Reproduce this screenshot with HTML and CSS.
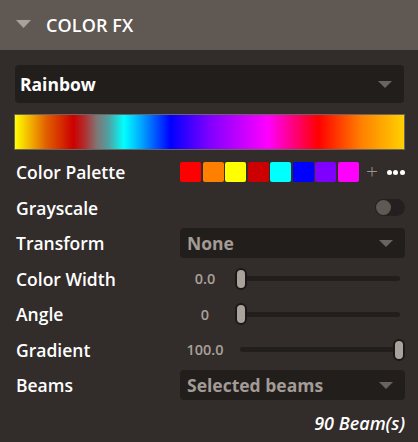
FILE: index.html
```html
<!DOCTYPE html>
<html lang="en">
<head>
    <meta charset="UTF-8">
    <title>Color FX</title>
    <link rel="stylesheet" href="styles.css">
</head>
<body>
    <div class="panel">
        <div class="panel-header">
            <svg class="caret" width="15" height="8" viewBox="0 0 15 8"><polygon points="0,0 15,0 7.5,8"/></svg>
            <span class="panel-title">COLOR FX</span>
        </div>
        <div class="panel-body">
            <div class="select select-big">
                <span>Rainbow</span>
                <svg class="arrow" width="14" height="7" viewBox="0 0 14 7"><polygon points="0,0 14,0 7,7"/></svg>
            </div>
            <div class="rainbow-bar"></div>

            <div class="rows">
                <div class="row">
                    <span class="label">Color Palette</span>
                    <div class="control palette">
                        <span class="swatch" style="background:#ff0000"></span>
                        <span class="swatch" style="background:#ff8000"></span>
                        <span class="swatch" style="background:#ffff00"></span>
                        <span class="swatch" style="background:#cc0000"></span>
                        <span class="swatch" style="background:#00ffff"></span>
                        <span class="swatch" style="background:#0000ff"></span>
                        <span class="swatch" style="background:#8000ff"></span>
                        <span class="swatch" style="background:#ff00ff"></span>
                        <span class="plus">+</span>
                        <span class="dots"><i></i><i></i><i></i></span>
                    </div>
                </div>
                <div class="row">
                    <span class="label">Grayscale</span>
                    <div class="control end">
                        <span class="toggle"><span class="knob"></span></span>
                    </div>
                </div>
                <div class="row">
                    <span class="label">Transform</span>
                    <div class="control select">
                        <span>None</span>
                        <svg class="arrow" width="14" height="7" viewBox="0 0 14 7"><polygon points="0,0 14,0 7,7"/></svg>
                    </div>
                </div>
                <div class="row">
                    <span class="label">Color Width</span>
                    <div class="control slider">
                        <span class="value">0.0</span>
                        <div class="track-wrap"><div class="track"></div><span class="thumb" style="left:0%"></span></div>
                    </div>
                </div>
                <div class="row">
                    <span class="label">Angle</span>
                    <div class="control slider">
                        <span class="value">0</span>
                        <div class="track-wrap"><div class="track"></div><span class="thumb" style="left:0%"></span></div>
                    </div>
                </div>
                <div class="row">
                    <span class="label">Gradient</span>
                    <div class="control slider">
                        <span class="value">100.0</span>
                        <div class="track-wrap"><div class="track"></div><span class="thumb thumb-max" style="left:100%"></span></div>
                    </div>
                </div>
                <div class="row">
                    <span class="label">Beams</span>
                    <div class="control select">
                        <span>Selected beams</span>
                        <svg class="arrow" width="14" height="7" viewBox="0 0 14 7"><polygon points="0,0 14,0 7,7"/></svg>
                    </div>
                </div>
            </div>
            <div class="beam-count">90 Beam(s)</div>
        </div>
    </div>
</body>
</html>
```

FILE: styles.css
```css
body {
    margin: 0;
    background-color: #322c2a;
    color: #ffffff;
    font-family: "Open Sans", "Noto Sans", sans-serif;
}
.panel {
    width: 418px;
    height: 442px;
    overflow: hidden;
}
.panel-header {
    height: 50px;
    background-color: #5f5853;
    display: flex;
    align-items: center;
    padding-left: 16px;
}
.caret {
    fill: #a8a29e;
    margin-right: 15px;
    margin-top: -3px;
}
.panel-title {
    font-size: 18px;
    font-weight: 600;
    letter-spacing: 0.1px;
}
.panel-body {
    padding: 15px 13px 0 14px;
}

/* dropdowns */
.select {
    background-color: #221e1c;
    border-radius: 4px;
    height: 30px;
    display: flex;
    align-items: center;
    justify-content: space-between;
    padding: 0 12px 0 7px;
    box-sizing: border-box;
    font-size: 17.5px;
    font-weight: 700;
    color: #a39b95;
}
.select-big {
    height: 38px;
    margin: 0 1px;
    padding-left: 5px;
    color: #ffffff;
}
.arrow {
    fill: #6a6461;
}
.rainbow-bar {
    margin-top: 11px;
    height: 34px;
    border: 1px solid #6a6560;
    background: linear-gradient(to right,
        #ffff00 0%, #f2b000 4%, #e06000 8%, #cc0000 15%, #b03030 18%,
        #807575 21%, #50a0a0 24%, #00ffff 28%, #00b0ff 32%, #0000ff 40%,
        #8000ff 50%, #ff00ff 65%, #ff0000 78%, #ff8000 89%, #ffd000 100%);
}

/* rows */
.rows {
    margin-top: 4.5px;
}
.row {
    height: 35.5px;
    display: flex;
    align-items: center;
    padding-left: 2px;
}
.label {
    flex: none;
    width: 164px;
    font-size: 17.5px;
    font-weight: 600;
}
.control {
    flex: 1;
    min-width: 0;
    display: flex;
    align-items: center;
}
.control.end {
    justify-content: flex-end;
}
.palette {
    gap: 1.5px;
}
.swatch {
    flex: none;
    width: 21px;
    height: 20px;
    border-radius: 2px;
}
.plus {
    color: #9c9590;
    font-size: 21px;
    font-weight: 300;
    line-height: 20px;
    margin-left: 6px;
    margin-top: -2px;
}
.dots {
    display: flex;
    gap: 1.5px;
    margin-left: 7px;
}
.dots i {
    width: 5px;
    height: 5px;
    border-radius: 50%;
    background-color: #ffffff;
}
.toggle {
    width: 30px;
    height: 17px;
    border-radius: 9px;
    background-color: #242020;
    display: flex;
    align-items: center;
    padding-left: 1px;
    box-sizing: border-box;
}
.knob {
    width: 15px;
    height: 15px;
    border-radius: 50%;
    background-color: #5f5853;
}

/* sliders */
.value {
    flex: none;
    width: 50px;
    text-align: center;
    font-size: 14.5px;
    font-weight: 600;
    color: #a8a09a;
}
.track-wrap {
    flex: 1;
    height: 22px;
    margin-left: 5px;
    position: relative;
    display: flex;
    align-items: center;
}
.track {
    flex: 1;
    height: 5px;
    margin: 0 5px;
    border-radius: 3px;
    background-color: #221e1c;
}
.thumb {
    position: absolute;
    top: 0;
    width: 12px;
    height: 22px;
    box-sizing: border-box;
    border: 2px solid #1c1817;
    border-radius: 6px;
    background-color: #aaa29c;
}
.thumb-max {
    margin-left: -12px;
}
.beam-count {
    text-align: right;
    font-size: 18px;
    font-weight: 600;
    font-style: italic;
    margin-top: 8px;
}
```
